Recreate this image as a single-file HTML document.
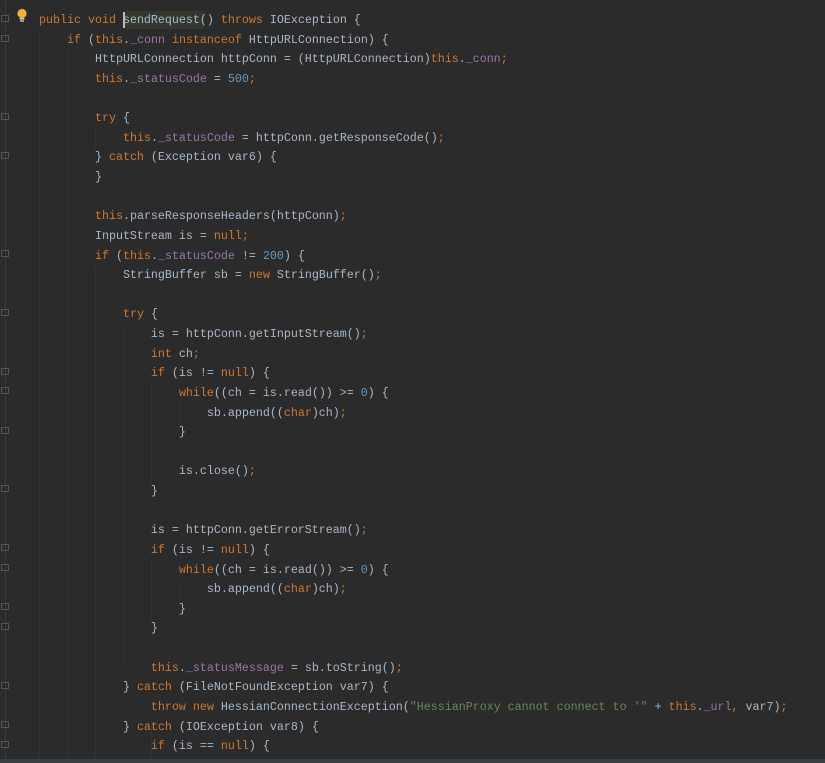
<!DOCTYPE html>
<html><head><meta charset="utf-8"><style>
html,body{margin:0;padding:0;}
body{width:825px;height:763px;background:#2b2b2b;overflow:hidden;position:relative;font-family:"Liberation Mono","DejaVu Sans Mono",monospace;}
pre{position:absolute;left:39px;top:11px;margin:0;font-family:inherit;font-size:11.67px;line-height:19.62px;color:#a9b7c6;white-space:pre;}
.k{color:#cc7832}.f{color:#9876aa}.n{color:#6897bb}.s{color:#6a8759}
.g{position:absolute;top:0;width:1px;background:#333333;}
.fold{position:absolute;left:1px;width:8px;height:7px;border:1px solid #555;box-sizing:border-box;}
.bottom{position:absolute;left:0;top:759px;width:825px;height:4px;background:#3c3f41;}
</style></head><body>
<div class="g" style="left:5px;height:759px;background:#3a3a3a"></div>
<div class="g" style="left:39px;top:31px;height:728px"></div>
<div class="g" style="left:67px;top:50px;height:709px"></div>
<div class="g" style="left:95px;top:128px;height:20px"></div>
<div class="g" style="left:95px;top:266px;height:493px"></div>
<div class="g" style="left:123px;top:324px;height:337px"></div>
<div class="g" style="left:151px;top:383px;height:100px"></div>
<div class="g" style="left:151px;top:560px;height:60px"></div>
<div class="g" style="left:179px;top:403px;height:20px"></div>
<div class="g" style="left:179px;top:580px;height:20px"></div>
<div class="g" style="left:151px;top:717px;height:42px"></div>
<div style="position:absolute;left:124px;top:11px;width:80px;height:18px;background:#32392f"></div>
<div style="position:absolute;left:123px;top:12px;width:2px;height:16px;background:#bbbbbb"></div>
<svg style="position:absolute;left:16px;top:8px" width="12" height="16" viewBox="0 0 12 16"><circle cx="6" cy="5.5" r="4.6" fill="#f0b23a"/><rect x="3.6" y="10" width="4.8" height="1.6" fill="#c8c8c8"/><rect x="4" y="12.3" width="4" height="1.4" fill="#c8c8c8"/></svg>
<div class="fold" style="top:15px"></div><div class="fold" style="top:35px"></div>
<div class="fold" style="top:113px"></div><div class="fold" style="top:152px"></div>
<div class="fold" style="top:250px"></div><div class="fold" style="top:309px"></div>
<div class="fold" style="top:368px"></div><div class="fold" style="top:387px"></div>
<div class="fold" style="top:427px"></div><div class="fold" style="top:485px"></div>
<div class="fold" style="top:544px"></div><div class="fold" style="top:564px"></div>
<div class="fold" style="top:603px"></div><div class="fold" style="top:623px"></div>
<div class="fold" style="top:682px"></div><div class="fold" style="top:721px"></div>
<div class="fold" style="top:741px"></div>
<pre><span class="k">public void</span> sendRequest() <span class="k">throws</span> IOException {
    <span class="k">if</span> (<span class="k">this</span>.<span class="f">_conn</span> <span class="k">instanceof</span> HttpURLConnection) {
        HttpURLConnection httpConn = (HttpURLConnection)<span class="k">this</span>.<span class="f">_conn</span><span class="k">;</span>
        <span class="k">this</span>.<span class="f">_statusCode</span> = <span class="n">500</span><span class="k">;</span>

        <span class="k">try</span> {
            <span class="k">this</span>.<span class="f">_statusCode</span> = httpConn.getResponseCode()<span class="k">;</span>
        } <span class="k">catch</span> (Exception var6) {
        }

        <span class="k">this</span>.parseResponseHeaders(httpConn)<span class="k">;</span>
        InputStream is = <span class="k">null;</span>
        <span class="k">if</span> (<span class="k">this</span>.<span class="f">_statusCode</span> != <span class="n">200</span>) {
            StringBuffer sb = <span class="k">new</span> StringBuffer()<span class="k">;</span>

            <span class="k">try</span> {
                is = httpConn.getInputStream()<span class="k">;</span>
                <span class="k">int</span> ch<span class="k">;</span>
                <span class="k">if</span> (is != <span class="k">null</span>) {
                    <span class="k">while</span>((ch = is.read()) >= <span class="n">0</span>) {
                        sb.append((<span class="k">char</span>)ch)<span class="k">;</span>
                    }

                    is.close()<span class="k">;</span>
                }

                is = httpConn.getErrorStream()<span class="k">;</span>
                <span class="k">if</span> (is != <span class="k">null</span>) {
                    <span class="k">while</span>((ch = is.read()) >= <span class="n">0</span>) {
                        sb.append((<span class="k">char</span>)ch)<span class="k">;</span>
                    }
                }

                <span class="k">this</span>.<span class="f">_statusMessage</span> = sb.toString()<span class="k">;</span>
            } <span class="k">catch</span> (FileNotFoundException var7) {
                <span class="k">throw new</span> HessianConnectionException(<span class="s">"HessianProxy cannot connect to '"</span> + <span class="k">this</span>.<span class="f">_url</span><span class="k">,</span> var7)<span class="k">;</span>
            } <span class="k">catch</span> (IOException var8) {
                <span class="k">if</span> (is == <span class="k">null</span>) {</pre>
<div class="bottom"></div>
</body></html>
